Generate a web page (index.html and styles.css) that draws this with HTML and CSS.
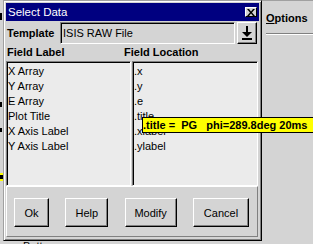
FILE: index.html
```html
<!DOCTYPE html>
<html lang="en">
<head>
    <meta charset="UTF-8">
    <title>Select Data</title>
    <link rel="stylesheet" href="styles.css">
</head>
<body>
    <div class="screen">
        <div class="gutter">
            <span class="bit bit-a"></span>
            <span class="bit bit-b"></span>
            <span class="bit bit-c"></span>
            <span class="bit bit-d"></span>
        </div>

        <div class="main-col">
            <div class="dialog">
                <div class="titlebar">
                    <span>Select Data</span>
                    <span class="close-btn">
                        <svg width="8" height="7" viewBox="0 0 8 7">
                            <path d="M0 0h2l2 2.5 2-2.5h2l-3 3.5 3 3.5h-2l-2-2.5-2 2.5h-2l3-3.5z" fill="#000"/>
                        </svg>
                    </span>
                </div>

                <div class="template-row">
                    <span class="template-label">Template</span>
                    <div class="entry">ISIS RAW File</div>
                    <span class="arrow-btn">
                        <svg width="18" height="20" viewBox="0 0 18 20">
                            <rect x="8" y="3" width="2" height="6" fill="#000"/>
                            <polygon points="4,9 14,9 9,14" fill="#000"/>
                            <rect x="4" y="15" width="10" height="2" fill="#000"/>
                        </svg>
                    </span>
                </div>

                <div class="field-heads">
                    <span class="head-label">Field Label</span>
                    <span>Field Location</span>
                </div>

                <div class="lists">
                    <ul class="list list-labels">
                        <li>X Array</li>
                        <li>Y Array</li>
                        <li>E Array</li>
                        <li>Plot Title</li>
                        <li>X Axis Label</li>
                        <li>Y Axis Label</li>
                    </ul>
                    <ul class="list list-locations">
                        <li>.x</li>
                        <li>.y</li>
                        <li>.e</li>
                        <li>.title</li>
                        <li>.xlabel</li>
                        <li>.ylabel</li>
                    </ul>
                </div>

                <div class="button-frame">
                    <button class="btn btn-ok">Ok</button>
                    <button class="btn btn-help">Help</button>
                    <button class="btn btn-modify">Modify</button>
                    <button class="btn btn-cancel">Cancel</button>
                </div>
            </div>
            <div class="below"><span>Buttons</span></div>
        </div>

        <div class="side">
            <div class="menu"><u>O</u>ptions</div>
        </div>

        <div class="tooltip">.title =  PG   phi=289.8deg 20ms</div>
    </div>
</body>
</html>
```

FILE: styles.css
```css
body {
    margin: 0;
    font-family: "Liberation Sans", Arial, sans-serif;
    font-size: 11px;
    color: #000;
}

.screen {
    position: relative;
    display: flex;
    width: 313px;
    height: 244px;
    overflow: hidden;
    background: #d4d4d4;
}

/* bits of the window behind the dialog */
.gutter {
    display: flex;
    flex-direction: column;
    width: 3px;
}

.bit {
    display: block;
    width: 2px;
    background: #000;
}

.bit-a {
    margin-top: 13px;
    height: 7px;
}

.bit-b {
    margin-top: 82px;
    height: 5px;
}

.bit-c {
    margin-top: 21px;
    height: 4px;
}

.bit-d {
    margin-top: 41px;
    height: 6px;
    width: 3px;
    background: #ffff00;
    border-top: 2px solid #ffff00;
    box-shadow: inset 0 -2px #ffff00, inset 0 0 0 3px #000;
}

.main-col {
    display: flex;
    flex-direction: column;
}

.dialog {
    width: 259px;
    box-sizing: border-box;
    border: 1px solid;
    border-color: #a0a0a0 #000 #000 #a0a0a0;
    box-shadow: inset 1px 1px #fff, inset -1px -1px #808080;
    padding: 2px 2px 3px;
    background: #d4d4d4;
}

.titlebar {
    display: flex;
    align-items: center;
    justify-content: space-between;
    height: 18px;
    padding: 0 2px;
    background: #000080;
    color: #fff;
    font-size: 11.5px;
}

.close-btn {
    display: flex;
    align-items: center;
    justify-content: center;
    width: 12px;
    height: 10px;
    box-sizing: border-box;
    background: #d4d4d4;
    border: 1px solid;
    border-color: #fff #000 #000 #fff;
}

.template-row {
    display: flex;
    align-items: center;
    margin-top: 1px;
    height: 22px;
}

.template-label {
    width: 54px;
    padding-left: 1px;
    box-sizing: border-box;
    font-weight: bold;
}

.entry {
    width: 175px;
    height: 22px;
    box-sizing: border-box;
    padding-left: 2px;
    line-height: 20px;
    border: 1px solid;
    border-color: #808080 #fff #fff #808080;
    box-shadow: inset 1px 1px #000;
}

.arrow-btn {
    display: flex;
    width: 20px;
    height: 22px;
    margin-left: 2px;
    box-sizing: border-box;
    border: 1px solid;
    border-color: #fff #000 #000 #fff;
    box-shadow: inset -1px -1px #808080;
}

.field-heads {
    display: flex;
    height: 17px;
    line-height: 17px;
    padding-left: 1px;
    font-weight: bold;
}

.head-label {
    width: 117px;
}

.lists {
    display: flex;
    gap: 1px;
}

.list {
    margin: 0;
    padding: 2px 0 0 1px;
    list-style: none;
    height: 125px;
    box-sizing: border-box;
    background: #ebebeb;
    border: 1px solid;
    border-color: #808080 #fff #fff #808080;
    box-shadow: inset 1px 1px #000;
}

.list li {
    line-height: 15px;
    white-space: nowrap;
}

.list-labels {
    width: 125px;
}

.list-locations {
    width: 126px;
}

.button-frame {
    display: flex;
    justify-content: space-between;
    width: 252px;
    box-sizing: border-box;
    padding: 11px 8px 9px 7px;
    border: 1px solid;
    border-color: #fff #808080 #808080 #fff;
}

.btn {
    height: 29px;
    padding: 0;
    box-sizing: border-box;
    font-family: inherit;
    font-size: 11px;
    color: #000;
    background: #d4d4d4;
    border: 1px solid;
    border-color: #fff #000 #000 #fff;
    box-shadow: inset -1px -1px #808080;
}

.btn-ok {
    width: 35px;
}

.btn-help {
    width: 43px;
}

.btn-modify {
    width: 52px;
}

.btn-cancel {
    width: 56px;
}

.below {
    height: 3px;
    overflow: hidden;
    padding-left: 20px;
    line-height: 11px;
}

.side {
    flex: 1;
    border-top: 1px solid #a0a0a0;
    padding-left: 4px;
}

.menu {
    height: 22px;
    padding-top: 10px;
    line-height: 14px;
    font-weight: bold;
    border-bottom: 1px solid #808080;
    box-shadow: 0 1px #fff;
}

.tooltip {
    position: absolute;
    left: 142px;
    top: 117px;
    height: 16px;
    box-sizing: border-box;
    padding-right: 12px;
    line-height: 14px;
    white-space: pre;
    font-weight: bold;
    background: #ffff00;
    border: 1px solid #000;
}
```
